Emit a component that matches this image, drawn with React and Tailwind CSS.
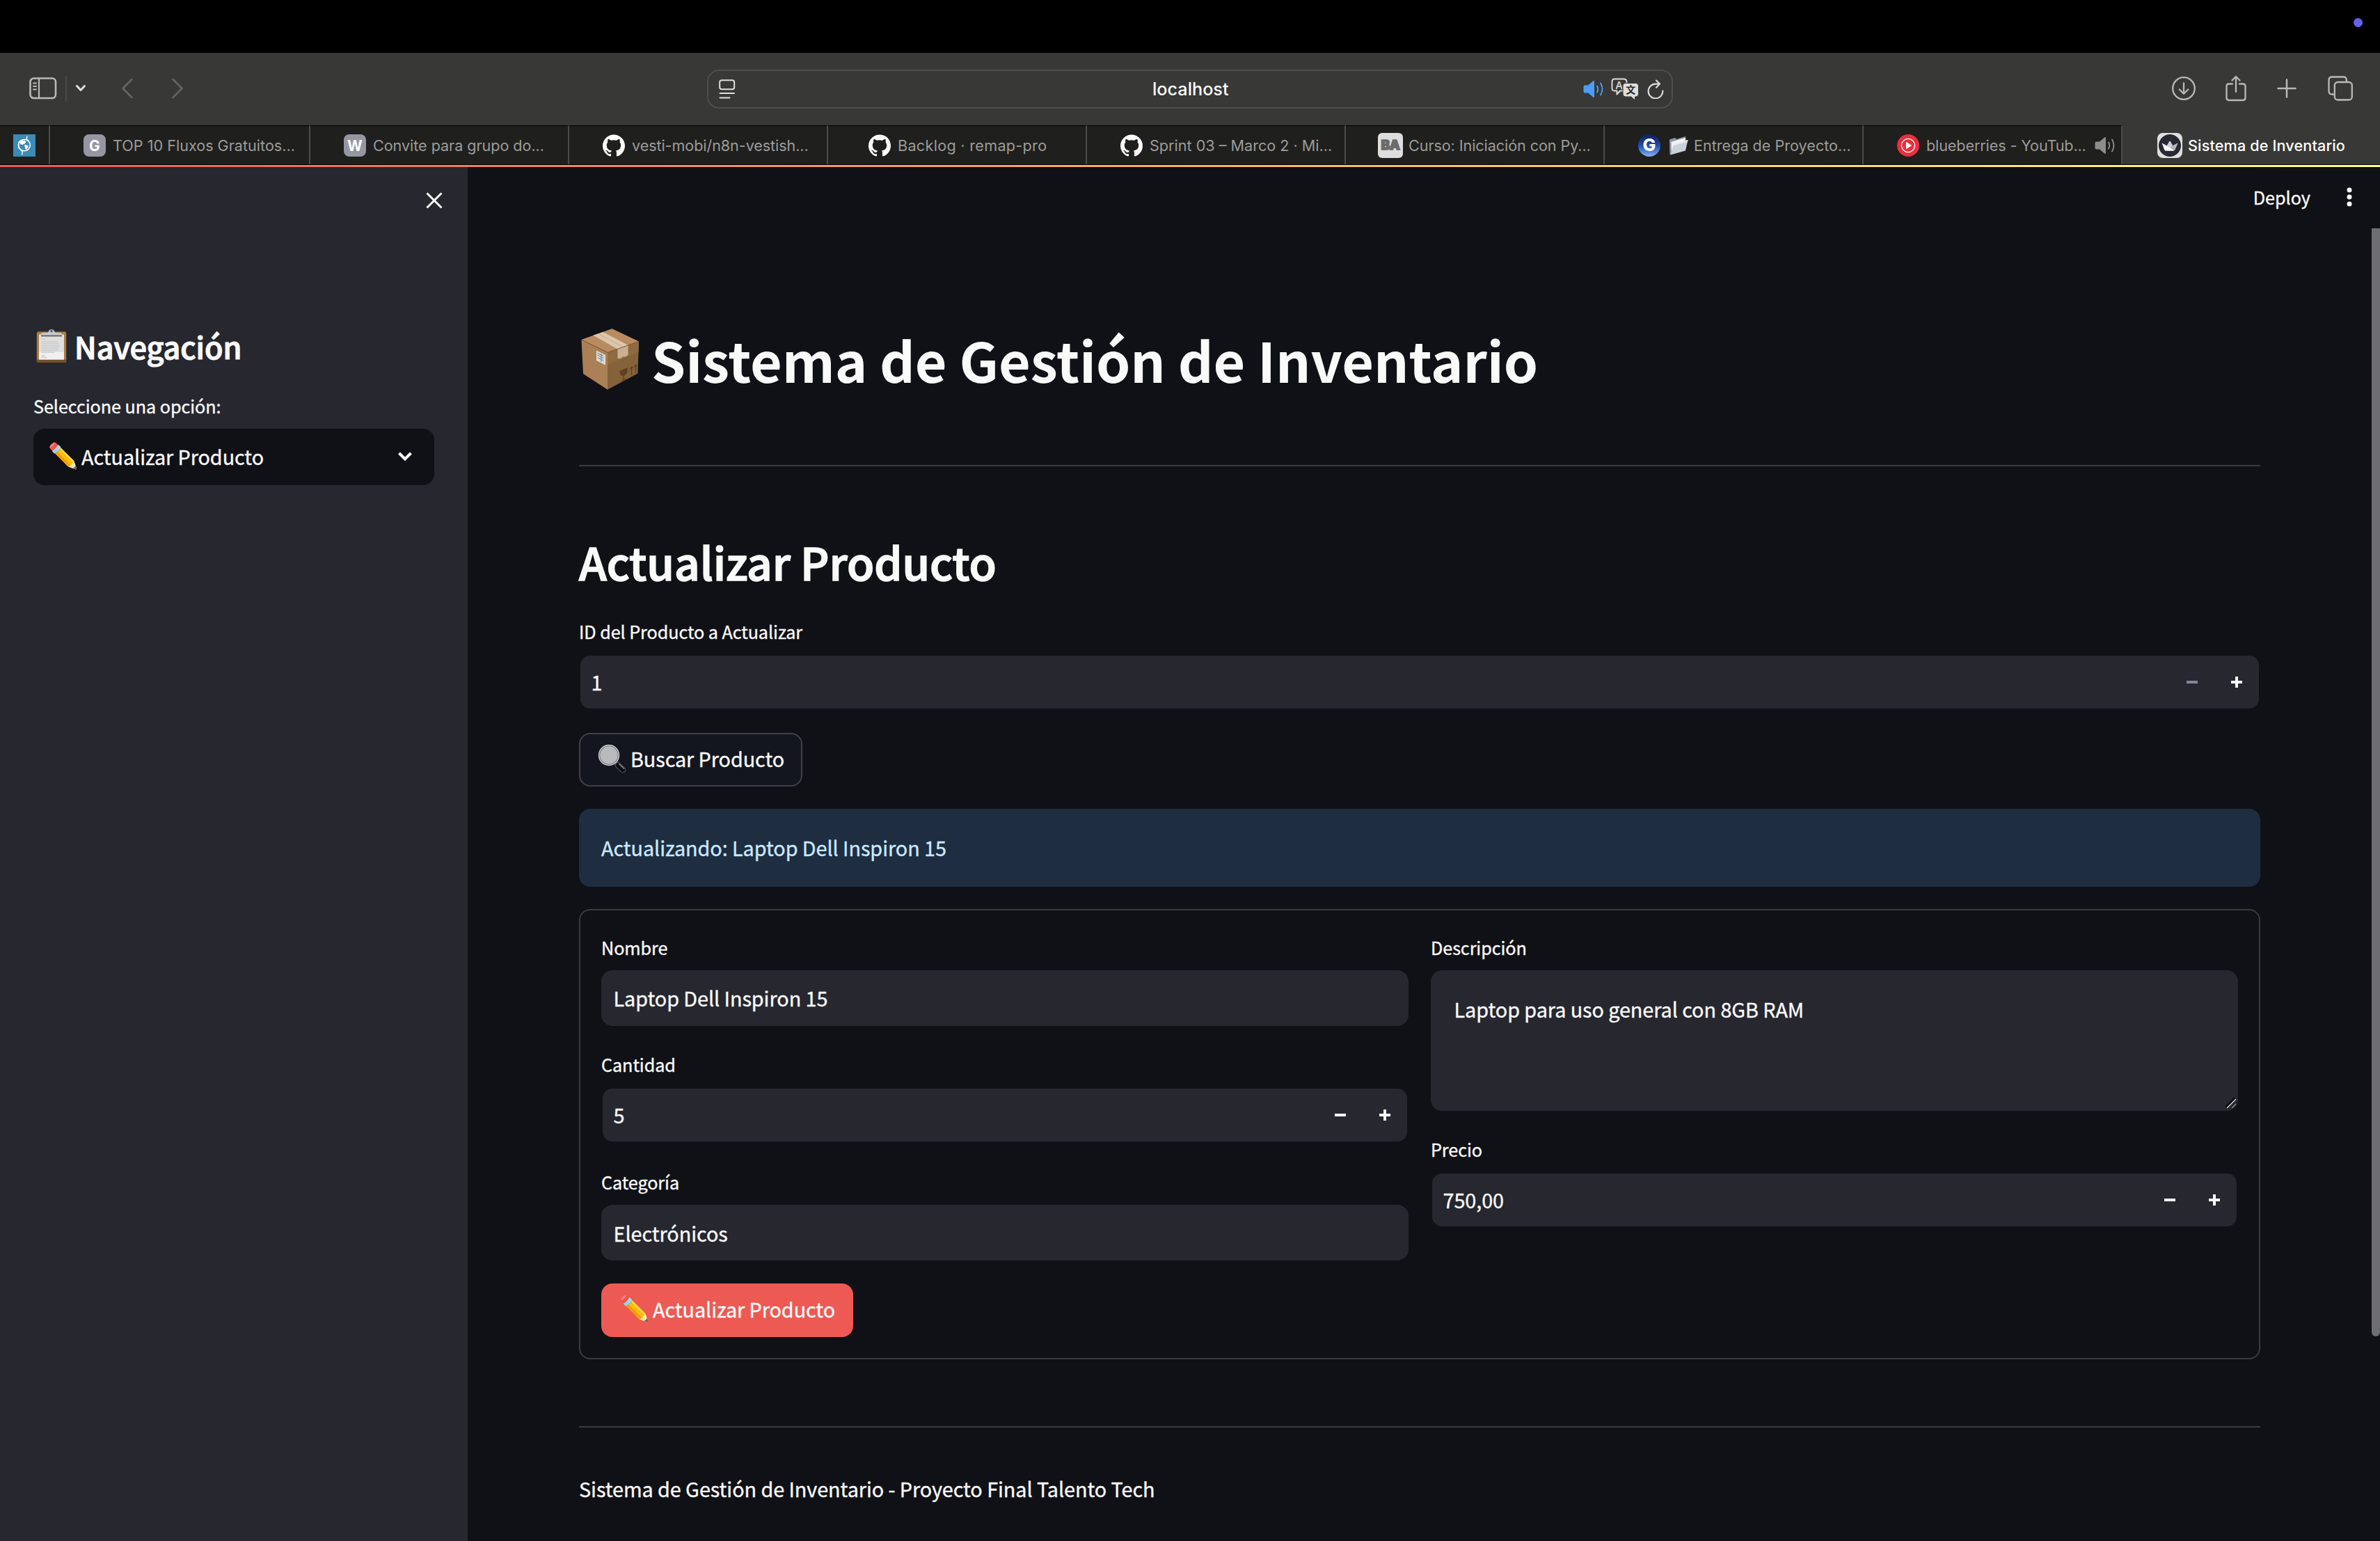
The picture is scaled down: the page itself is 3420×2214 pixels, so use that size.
import React from "react";
import { SiGithub } from "react-icons/si";

/* ---------- browser chrome icons ---------- */

const SidebarIcon = () => (
  <svg width="40" height="32" viewBox="0 0 40 32" fill="none" stroke="#b9b9b6">
    <rect x="1.5" y="1.5" width="36.5" height="28.5" rx="5" strokeWidth="2.6" />
    <path d="M14 2v28" strokeWidth="2.2" />
    <path d="M6 8.5h4M6 13h4M6 17.500h4" strokeWidth="1.9" strokeLinecap="round" />
  </svg>
);

const SmallChevron = () => (
  <svg width="16" height="12" viewBox="0 0 16 12" fill="none" stroke="#dededc" strokeWidth="3" strokeLinecap="round" strokeLinejoin="round">
    <path d="M2.500 2.500L8 8.500l5.500-6" />
  </svg>
);

const NavArrow = ({ flip }) => (
  <svg width="18" height="30" viewBox="0 0 18 30" fill="none" stroke="#656563" strokeWidth="2.6" strokeLinecap="round" strokeLinejoin="round" className={flip ? "rotate-180" : ""}>
    <path d="M15.500 2L2.500 15l13 13" />
  </svg>
);

const ReaderIcon = () => (
  <svg width="24" height="28" viewBox="0 0 24 28" fill="none" stroke="#dededc" strokeWidth="2" strokeLinecap="round">
    <rect x="1.200" y="1.200" width="21" height="13" rx="3" />
    <path d="M1.500 20h20.500M1.500 26.500h14" />
  </svg>
);

const Speaker = ({ color }) => (
  <svg width="30" height="26" viewBox="0 0 30 26" fill="none">
    <path d="M0.500 9.500q0-2 2-2h4.500L14 1.600q2-1.400 2 .8v21.200q0 2.200-2 .8L7 18.500H2.500q-2 0-2-2z" fill={color} />
    <path d="M20 8.500q2.400 4.500 0 9M25 4.500q5 8.500 0 17" stroke={color} strokeWidth="1.900" strokeLinecap="round" />
  </svg>
);

const TranslateIcon = () => (
  <svg width="40" height="32" viewBox="0 0 40 32">
    <path d="M5 1.500h13q4.500 0 4.500 4v9.500q0 3.500-4 3.500h-5.500l-4.500 5v-5H5q-3.500 0-3.500-3.500V5q0-3.500 3.500-3.500z" fill="none" stroke="#dededc" strokeWidth="1.900" strokeLinejoin="round" />
    <text x="11.500" y="15.500" textAnchor="middle" fontSize="15" fill="#dededc" className="font-['Inter',sans-serif] font-medium">A</text>
    <path d="M21.500 7.500h14q4 0 4 4v11.500q0 4-4 4h-1v5l-5.500-5h-8q-4 0-4-4V11.500q0-4 4.500-4z" fill="#dededc" stroke="#383836" strokeWidth="1" />
    <text x="28.300" y="22" textAnchor="middle" fontSize="14" fill="#2c2c2a" className="font-['Noto_Sans_CJK_SC',sans-serif] font-bold">文</text>
  </svg>
);

const ReloadIcon = () => (
  <svg width="24" height="28" viewBox="0 0 24 28" fill="none" stroke="#dededc" strokeWidth="2.100" strokeLinecap="round" strokeLinejoin="round">
    <path d="M17.500 6.600H12A10.400 10.400 0 1 0 22.400 16.600" />
    <path d="M13 1.500l5 5.100-5 5.100" />
  </svg>
);

const DownloadIcon = () => (
  <svg width="36" height="36" viewBox="0 0 36 36" fill="none" stroke="#b9b9b6" strokeWidth="2.300" strokeLinecap="round" strokeLinejoin="round">
    <circle cx="18" cy="18" r="15.800" />
    <path d="M18 10.500v15M11.800 19.500l6.200 6.200 6.200-6.200" />
  </svg>
);

const ShareIcon = () => (
  <svg width="32" height="38" viewBox="0 0 32 38" fill="none" stroke="#b9b9b6" strokeWidth="2.300" strokeLinecap="round" strokeLinejoin="round">
    <path d="M11 12.500H6q-3.500 0-3.500 3.500v16.500Q2.500 36 6 36h20q3.500 0 3.500-3.500V16q0-3.500-3.500-3.500h-5" />
    <path d="M16 24V2.200M10.500 7.500L16 2l5.500 5.500" />
  </svg>
);

const PlusIcon = () => (
  <svg width="28" height="28" viewBox="0 0 28 28" fill="none" stroke="#b9b9b6" strokeWidth="2.500" strokeLinecap="round">
    <path d="M14 1.500v25M1.500 14h25" />
  </svg>
);

const TabsIcon = () => (
  <svg width="36" height="36" viewBox="0 0 36 36" fill="none" stroke="#b9b9b6" strokeWidth="2.300" strokeLinejoin="round">
    <rect x="9.800" y="9" width="25" height="25.500" rx="4.500" />
    <path d="M9.500 26.500H6q-4.500 0-4.500-4.500V6q0-4.500 4.500-4.500h16.500q4.300 0 4.300 4.500v3" />
  </svg>
);

/* ---------- favicons ---------- */

const LetterIcon = ({ children }) => (
  <span className="flex size-8 items-center justify-center rounded-lg bg-[#9696a3] pt-0.5 text-[21px] font-bold leading-none text-white">{children}</span>
);

const GlobeIcon = () => (
  <span className="flex size-8 items-center justify-center bg-[#3e8ab5]">
    <svg width="32" height="32" viewBox="0 0 32 32" fill="none" stroke="#fff">
      <circle cx="16" cy="15.500" r="8.300" strokeWidth="1.500" />
      <path d="M10 10.500q3-2.500 6-2l2.500 2-2 3-3.500 1.500-3-1zM16 15l5 .8.500 2.500-3 4.200-1.500-3z" fill="#fff" stroke="none" />
      <path d="M20 2.500l-.8 4.500 3 3M12.500 29.500l.8-4.500-3-3.500M9 10q-3.500 5.500 0 11" strokeWidth="1.400" />
    </svg>
  </span>
);

const PlayIcon = () => (
  <svg width="32" height="32" viewBox="0 0 32 32">
    <circle cx="16" cy="16" r="16" fill="#eb2f3d" />
    <circle cx="16" cy="16" r="9.600" fill="none" stroke="#fff" strokeWidth="1.300" />
    <path d="M13 10.800l8.200 5.200-8.200 5.200z" fill="#fff" />
  </svg>
);

const StreamlitIcon = () => (
  <span className="flex size-9 items-center justify-center rounded-lg bg-[#dfdfe1]">
    <svg width="32" height="32" viewBox="0 0 32 32">
      <circle cx="16" cy="16" r="16" fill="#262833" />
      <path d="M11.600 16.200L15.300 10q.7-1 1.400 0l3.700 6.200L16 19.500z" fill="#d0d0d4" />
      <path d="M4.600 12.500l11.400 6.300 11.400-6.300-4 9q-.8 2.200-2.400 2.200H10.500q-1.800 0-2.600-2.200z" fill="#fff" />
      <path d="M27.400 12.500l-11.400 6.300 6 4.700q1-.5 1.500-2z" fill="#b4b4ba" />
    </svg>
  </span>
);

const GradientG = () => (
  <span className="flex size-8 items-center justify-center rounded-full bg-linear-to-b from-[#0c1f5c] via-[#1f4cb0] to-[#86b4f2] text-[25px] font-extrabold leading-none text-white">G</span>
);

const BaIcon = () => (
  <span className="flex size-9 items-center justify-center rounded-md bg-[#dedede] text-[19px] font-black leading-none tracking-[-0.5px] text-[#6b6b6b] [-webkit-text-stroke:1.5px_#6b6b6b]">BA</span>
);

const GithubIcon = () => <SiGithub className="size-8 text-white" />;

const FolderIcon = () => (
  <svg width="28" height="28" viewBox="0 0 28 28">
    <path d="M1 5.500L9 3l2 2L24 1l.8 5-20 20.500-3.300.5z" fill="#8e99a5" />
    <path d="M3.500 9l20-6 .3 5L4 25z" fill="#f2f5f7" />
    <path d="M7 12L27.500 6 24 21.500 2.500 27.500z" fill="#c9d2da" />
    <path d="M7 12L27.500 6l-.5 2.500L6.600 14.500z" fill="#e8edf1" />
  </svg>
);

/* ---------- page drawings ---------- */

const ClipboardDrawing = () => (
  <svg width="44" height="50" viewBox="0 0 44 50">
    <rect x="0.800" y="4.500" width="42.400" height="44.500" rx="2.500" fill="#a97d43" />
    <rect x="0.800" y="44.500" width="42.400" height="4.500" rx="1.500" fill="#74502a" />
    <rect x="4" y="8.500" width="36" height="36" fill="#dfdfdf" />
    <rect x="4" y="34" width="36" height="10.500" fill="#f0f0f0" />
    <path d="M7.500 15h5M7.500 19h24M7.500 22h25M7.500 25h26M7.500 28h25M7.500 31h24M7.500 34h19M7.500 39h5M7.500 41.500h8" stroke="#cacaca" strokeWidth="1.500" />
    <path d="M7 10.500V8.500q0-2.500 3-2.500h7q1-3.500 2.500-4.200 2.500-1.300 5 0Q26 2.500 27 6h7q3 0 3 2.500v2z" fill="#c4cbd3" />
    <path d="M7 9.500h30v2H7z" fill="#6e665c" />
    <circle cx="22" cy="3.800" r="1.700" fill="#4c515a" />
  </svg>
);

const BoxDrawing = () => (
  <svg width="84" height="88" viewBox="0 0 84 88" className="shrink-0">
    <path d="M0.500 16L44.500 0.300 83 18.500 38 34.500z" fill="#b98b60" />
    <path d="M0.500 16L38 34.500V87.700L3 65z" fill="#ab8056" />
    <path d="M38 34.500L83 18.500 81.500 64.500 38 87.700z" fill="#85623a" />
    <path d="M38 34.500L83 18.500 82.500 34 38 52z" fill="#8f6a41" />
    <path d="M17.500 9.800L31.500 5 67.600 24 52.500 29.400z" fill="#dcc7ad" />
    <path d="M24.500 7.400L60 26.700" stroke="#cdb497" strokeWidth="1.500" />
    <path d="M52.500 29.400L67.600 24v14l-3.500 2.600-3.600-.4-3.800 2.700-4.200.2z" fill="#c9b192" />
    <path d="M22 31.500l13 6.500v14.500l-13-6.500z" fill="#d9d9d6" />
    <path d="M24 35.500l8 4M24 38.500l8 4M24 42l8 4M29 36v12" stroke="#8a8f96" strokeWidth="1.300" />
    <path d="M0.500 16L38 34.500 83 18.500" fill="none" stroke="#7a5731" strokeWidth="1" />
    <path d="M56 61.500l10-4.500q1 7.500-4.500 10.500-5.500.5-5.500-6zM61 67v6.500M58 75.500l7-3.500" fill="#5e4122" stroke="#5e4122" strokeWidth="1.300" />
    <path d="M72.500 67V56M70.500 58.500l2-3.500 2 1.800M78.500 64V53M76.500 55.500l2-3.500 2 1.800" fill="none" stroke="#5e4122" strokeWidth="1.400" />
  </svg>
);

const MagnifierDrawing = () => (
  <svg width="42" height="42" viewBox="0 0 42 42">
    <path d="M24.500 26.500l3.500-3 3.500 4-3.500 3z" fill="#3b3d42" />
    <path d="M29 30.500L36 37" stroke="#606369" strokeWidth="8.500" strokeLinecap="round" />
    <path d="M29 30.500L36 37" stroke="#0c0d10" strokeWidth="6.500" strokeLinecap="round" />
    <path d="M31 28.800l6.500 6.500" stroke="#8b8e94" strokeWidth="1.500" strokeLinecap="round" />
    <circle cx="16" cy="16" r="14" fill="#b9babc" stroke="#6f7479" strokeWidth="2.600" />
    <circle cx="16" cy="16" r="14.400" fill="none" stroke="#d4dae0" strokeWidth="1.200" />
  </svg>
);

/* ---------- shared pieces ---------- */

const Emoji = ({ children, className }) => (
  <span className={"flex shrink-0 items-center justify-center font-['Noto_Color_Emoji'] " + className}>{children}</span>
);

const Label = ({ children, className = "" }) => (
  <div className={"h-[42px] text-[25.2px] leading-[42px] " + className}>{children}</div>
);

const TextField = ({ value, className = "" }) => (
  <div className={"mt-3 flex h-20 items-center rounded-2xl bg-[#26272f] px-[17.5px] " + className}>{value}</div>
);

const NumberField = ({ value, atMinimum }) => (
  <div className="mt-3 h-20 p-0.5">
    <div className="flex h-full items-center rounded-[14px] bg-[#26272f] pl-[15.5px]">
      <span className="grow">{value}</span>
      <span className="flex w-16 justify-center">
        <span className={atMinimum ? "h-1 w-4 bg-[#83859a]" : "h-1 w-4 bg-[#fafafa]"} />
      </span>
      <span className="flex w-16 justify-center">
        <svg width="16" height="16" viewBox="0 0 16 16" fill="#fafafa">
          <path d="M6 0h4v6h6v4h-6v6H6v-6H0V6h6z" />
        </svg>
      </span>
    </div>
  </div>
);

const Tab = ({ className, children }) => (
  <div className={"flex shrink-0 items-center whitespace-nowrap border-r-2 border-t border-r-[#4b4b49] border-t-black bg-[#1f1f1d] " + className}>{children}</div>
);

function Chrome() {
  return (
    <header className="font-['Inter',sans-serif]">
      <div className="flex h-[76px] justify-end bg-black pr-[25px] pt-[26px]">
        <span className="size-[13px] rounded-full bg-[#6462ea]" />
      </div>

      <div className="flex h-[104px] items-center bg-[#383836]">
        <div className="flex w-[1016px] items-center pb-0.5 pl-[42px]">
          <SidebarIcon />
          <span className="ml-3 h-9 w-0.5 bg-[#4a4a48]" />
          <span className="ml-3"><SmallChevron /></span>
          <span className="ml-[50px]"><NavArrow /></span>
          <span className="ml-[54px]"><NavArrow flip /></span>
        </div>
        <div className="flex h-14 w-[1388px] items-center rounded-[17px] border-2 border-[#4e4e4c] pl-[15px] pr-[11px]">
          <ReaderIcon />
          <span className="ml-[599px] pt-0.5 text-[25.2px] font-medium leading-none text-white">localhost</span>
          <span className="ml-auto"><Speaker color="#4c9df6" /></span>
          <span className="ml-2.5"><TranslateIcon /></span>
          <span className="ml-3"><ReloadIcon /></span>
        </div>
        <div className="ml-auto flex items-center pb-0.5 pr-[39px]">
          <DownloadIcon />
          <span className="ml-[41px]"><ShareIcon /></span>
          <span className="ml-[43px]"><PlusIcon /></span>
          <span className="ml-[45px]"><TabsIcon /></span>
        </div>
      </div>

      <div className="flex h-14 text-[21.6px] leading-8 text-[#9c9c9a]">
        <Tab className="w-[72px] pl-[19px]"><GlobeIcon /></Tab>
        <Tab className="w-[374px] gap-2.5 pl-12"><LetterIcon>G</LetterIcon><span>TOP 10 Fluxos Gratuitos...</span></Tab>
        <Tab className="w-[372px] gap-2.5 pl-12"><LetterIcon>W</LetterIcon><span className="tracking-[-0.05px]">Convite para grupo do...</span></Tab>
        <Tab className="w-[372px] gap-2.5 pl-12"><GithubIcon /><span className="tracking-[-0.08px]">vesti-mobi/n8n-vestish...</span></Tab>
        <Tab className="w-[372px] gap-2.5 pl-[58px]"><GithubIcon /><span className="tracking-[0.3px]">Backlog · remap-pro</span></Tab>
        <Tab className="w-[372px] gap-2.5 pl-12"><GithubIcon /><span>Sprint 03 – Marco 2 · Mi...</span></Tab>
        <Tab className="w-[372px] gap-2 pl-[46px]"><BaIcon /><span className="tracking-[-0.08px]">Curso: Iniciación con Py...</span></Tab>
        <Tab className="w-[372px] pl-12"><GradientG /><span className="ml-3"><FolderIcon /></span><span className="ml-2">Entrega de Proyecto...</span></Tab>
        <Tab className="w-[372px] pl-12"><PlayIcon /><span className="ml-2.5 tracking-[-0.12px]">blueberries - YouTub...</span><span className="ml-3"><Speaker color="#8c8c8a" /></span></Tab>
        <div className="flex grow items-center gap-2 bg-[#383836] pl-[50px] pt-px font-medium tracking-[0.15px] text-white">
          <StreamlitIcon /><span>Sistema de Inventario</span>
        </div>
      </div>
      <div className="h-px bg-black" />
      <div className="h-[3px] bg-linear-to-r from-[#ec5955] to-[#fdfb8e]" />
    </header>
  );
}

function Sidebar() {
  return (
    <aside className="w-[672px] shrink-0 bg-[#26272f] px-12">
      <div className="flex h-[96px] items-center justify-end">
        <svg width="24" height="24" viewBox="0 0 24 24" stroke="#fafafa" strokeWidth="3" className="translate-x-3">
          <path d="M1.500 1.500l21 21M22.500 1.500l-21 21" />
        </svg>
      </div>
      <div className="mt-[132px] flex h-[58px] items-center pl-1">
        <ClipboardDrawing />
        <h2 className="ml-[11px] text-[43.2px] font-medium leading-[58px] [-webkit-text-stroke:1.2px_#fafafa]">Navegación</h2>
      </div>
      <Label className="mt-9">Seleccione una opción:</Label>
      <div className="mt-3 flex h-[81px] items-center rounded-2xl bg-[#101116] pb-px pl-[21px] pr-8">
        <Emoji className="h-12 w-11 text-[35px]">✏️</Emoji>
        <span className="ml-1">Actualizar Producto</span>
        <svg width="20" height="14" viewBox="0 0 20 14" fill="none" stroke="#fafafa" strokeWidth="4" className="ml-auto">
          <path d="M1.500 2l8.500 8.500L18.500 2" />
        </svg>
      </div>
    </aside>
  );
}

function UpdateForm() {
  return (
    <section className="mt-8 h-[647px] rounded-2xl border-2 border-[#3a3b40] px-[30px] pt-8">
      <div className="grid grid-cols-2 gap-8">
        <div>
          <Label>Nombre</Label>
          <TextField value="Laptop Dell Inspiron 15" className="pb-px" />
          <Label className="mt-[34px]">Cantidad</Label>
          <NumberField value="5" />
          <Label className="mt-[35px]">Categoría</Label>
          <TextField value="Electrónicos" className="pt-0.5" />
        </div>
        <div>
          <Label>Descripción</Label>
          <div className="mt-3 flex h-[202px] items-end justify-between rounded-2xl bg-[#26272f] pb-[3px] pl-[33.5px] pr-0.5">
            <p className="mt-8 self-start leading-[48px]">Laptop para uso general con 8GB RAM</p>
            <svg width="16" height="16" viewBox="0 0 16 16" fill="none">
              <path d="M0 14L14 0" stroke="#08090c" strokeWidth="2.500" />
              <path d="M2 15L15 2" stroke="#c9c9cc" strokeWidth="1.600" />
              <path d="M9 15l6-6" stroke="#8c8c90" strokeWidth="1.400" />
            </svg>
          </div>
          <Label className="mt-[34px]">Precio</Label>
          <NumberField value="750,00" />
        </div>
      </div>
      <button className="mt-[33px] flex h-[77px] w-[362px] items-center rounded-2xl bg-[#ed5a53] pb-[3px] pl-[26px]">
        <Emoji className="h-12 w-11 text-[35px]">✏️</Emoji>
        <span className="ml-1">Actualizar Producto</span>
      </button>
    </section>
  );
}

function Main() {
  return (
    <main className="flex grow bg-[#101116]">
      <div className="w-[2736px] pl-40">
        <div className="h-[228px]" />
        <h1 className="flex h-24 items-center pl-[3px] text-[78.9px] font-bold leading-[96px] [-webkit-text-stroke:0]">
          <BoxDrawing />
          <span className="ml-[17px] tracking-[-0.06px]">Sistema de Gestión de Inventario</span>
        </h1>
        <div className="mr-40 mt-[104px] h-0.5 bg-[#3b3c41]" />
        <h2 className="mt-[92px] h-[88px] text-[64px] font-medium leading-[88px] [-webkit-text-stroke:1.6px_#fafafa]">Actualizar Producto</h2>
        <div className="mr-40">
          <Label className="mt-9">ID del Producto a Actualizar</Label>
          <NumberField value="1" atMinimum />
          <button className="mt-[33px] flex h-[77px] w-[321px] items-center rounded-2xl border-2 border-[#404149] bg-[#14161f] pb-1 pl-[25px]">
            <MagnifierDrawing />
            <span className="ml-[5px]">Buscar Producto</span>
          </button>
          <div className="mt-8 flex h-28 items-center rounded-2xl bg-[#1f2d40] px-8 text-[#cae9ff] [-webkit-text-stroke:0.35px_#cae9ff]">Actualizando: Laptop Dell Inspiron 15</div>
          <UpdateForm />
          <div className="mt-24 h-0.5 bg-[#3b3c41]" />
          <p className="mt-16 leading-[48px]">Sistema de Gestión de Inventario - Proyecto Final Talento Tech</p>
        </div>
      </div>
      <div className="w-3 shrink-0">
        <div className="mt-[88px] h-[1592px] rounded-b-full bg-[#6e6e72]" />
      </div>
    </main>
  );
}

export default function App() {
  return (
    <div className="relative flex h-[2214px] w-[3420px] flex-col overflow-hidden bg-[#101116]">
      <Chrome />
      <div className="flex grow font-['Noto_Sans_CJK_JP',sans-serif] text-[28.8px] leading-[48px] tracking-[-0.07px] text-[#fafafa] [-webkit-text-stroke:0.35px_#fafafa]">
        <Sidebar />
        <Main />
      </div>
      <div className="absolute right-10 top-[239px] flex h-[88px] items-center gap-[52px] font-['Noto_Sans_CJK_JP',sans-serif] text-[25.2px] leading-[42px] text-[#fafafa] [-webkit-text-stroke:0.35px_#fafafa]">
        <span>Deploy</span>
        <svg width="8" height="28" viewBox="0 0 8 28" fill="#fafafa">
          <circle cx="4" cy="4" r="3.500" />
          <circle cx="4" cy="14" r="3.500" />
          <circle cx="4" cy="24" r="3.500" />
        </svg>
      </div>
    </div>
  );
}
